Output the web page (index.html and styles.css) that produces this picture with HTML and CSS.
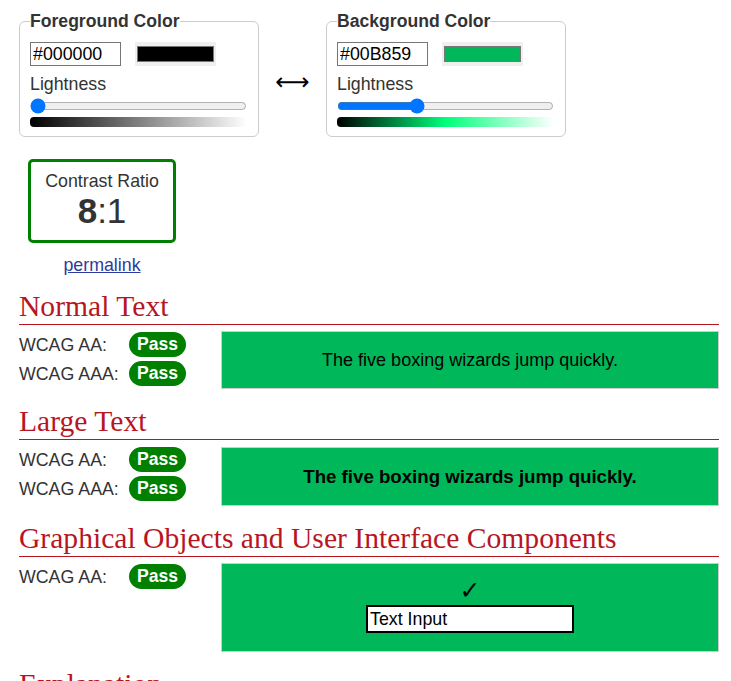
FILE: index.html
```html
<!DOCTYPE html>
<html lang="en">
<head>
<meta charset="utf-8">
<title>Contrast Checker</title>
<link rel="stylesheet" href="styles.css">
</head>
<body>
<div class="page">
  <div class="pickers">
    <fieldset class="picker">
      <legend>Foreground Color</legend>
      <div class="color-row">
        <input class="hex" type="text" value="#000000">
        <span class="swatch"><span class="swatch-fill fill-fg"></span></span>
      </div>
      <div class="light-label">Lightness</div>
      <input class="slider" type="range" min="0" max="100" value="0">
      <div class="grad grad-fg"></div>
    </fieldset>
    <div class="swap">&#x27F7;</div>
    <fieldset class="picker">
      <legend>Background Color</legend>
      <div class="color-row">
        <input class="hex" type="text" value="#00B859">
        <span class="swatch"><span class="swatch-fill fill-bg"></span></span>
      </div>
      <div class="light-label">Lightness</div>
      <input class="slider" type="range" min="0" max="100" value="36">
      <div class="grad grad-bg"></div>
    </fieldset>
  </div>

  <div class="ratio-wrap">
    <div class="ratio">
      <div class="ratio-label">Contrast Ratio</div>
      <div class="ratio-value"><b>8</b>:1</div>
    </div>
    <a class="permalink" href="#">permalink</a>
  </div>

  <h2 class="section-title">Normal Text</h2>
  <div class="result">
    <div class="checks">
      <div class="check"><span class="lbl">WCAG AA:</span><span class="pass">Pass</span></div>
      <div class="check"><span class="lbl">WCAG AAA:</span><span class="pass">Pass</span></div>
    </div>
    <div class="sample sample-normal">The five boxing wizards jump quickly.</div>
  </div>

  <h2 class="section-title">Large Text</h2>
  <div class="result">
    <div class="checks">
      <div class="check"><span class="lbl">WCAG AA:</span><span class="pass">Pass</span></div>
      <div class="check"><span class="lbl">WCAG AAA:</span><span class="pass">Pass</span></div>
    </div>
    <div class="sample sample-large">The five boxing wizards jump quickly.</div>
  </div>

  <h2 class="section-title">Graphical Objects and User Interface Components</h2>
  <div class="result">
    <div class="checks">
      <div class="check"><span class="lbl">WCAG AA:</span><span class="pass">Pass</span></div>
    </div>
    <div class="sample sample-ui">
      <span class="tick">&#x2713;</span>
      <input class="demo-input" type="text" value="Text Input">
    </div>
  </div>

  <h2 class="section-title">Explanation</h2>
</div>
</body>
</html>
```

FILE: styles.css
```css
html, body {
  margin: 0;
  padding: 0;
  background: #fff;
}

body {
  font-family: "Liberation Sans", Arial, sans-serif;
  font-size: 17.8px;
  line-height: 20px;
  color: #333;
}

.page {
  width: 700px;
  padding-left: 19px;
}

/* Pickers */
.pickers {
  display: flex;
  margin-top: 11px;
}

.picker {
  width: 240px;
  box-sizing: border-box;
  margin: 0;
  padding: 11px 11px 9px 10px;
  border: 1px solid #ccc;
  border-radius: 6px;
}

.picker legend {
  padding: 0;
  font-weight: bold;
  font-size: 17.6px;
  line-height: 20px;
  color: #333;
}

.color-row {
  display: flex;
  gap: 14px;
}

.hex {
  width: 91px;
  height: 24px;
  box-sizing: border-box;
  margin: 0;
  padding: 1px 2px;
  border: 1px solid #767676;
  font-family: "Liberation Sans", Arial, sans-serif;
  font-size: 17.8px;
  color: #000;
}

.swatch {
  width: 81px;
  height: 24px;
  box-sizing: border-box;
  padding: 4px 2px;
  background: #efefef;
  display: flex;
}

.swatch-fill {
  flex: 1;
  border: 1px solid #767676;
}

.fill-fg { background: #000000; }
.fill-bg { background: #00B859; }

.light-label {
  margin-top: 8px;
}

.slider {
  display: block;
  width: 217px;
  height: 16px;
  margin: 4px 0 0;
}

.grad {
  margin-top: 3px;
  width: 217px;
  height: 10px;
  border-radius: 4px;
}

.grad-fg {
  background: linear-gradient(to right, #000, #fff);
}

.grad-bg {
  background: linear-gradient(to right, #000, hsl(149, 100%, 50%), #fff);
}

.swap {
  width: 67px;
  display: flex;
  align-items: center;
  justify-content: center;
  padding-top: 16px;
  font-family: "DejaVu Sans", sans-serif;
  font-size: 24px;
  color: #000;
}

/* Ratio */
.ratio-wrap {
  width: 148px;
  margin: 22px 0 0 9px;
  display: flex;
  flex-direction: column;
  align-items: center;
}

.ratio {
  width: 148px;
  box-sizing: border-box;
  border: 3px solid #008000;
  border-radius: 5px;
  padding: 9px 0;
  text-align: center;
}

.ratio-value {
  font-size: 35px;
  line-height: 40px;
}

.permalink {
  margin-top: 12px;
  color: #2b3c9e;
}

/* Sections */
.section-title {
  margin: 14px 0 0;
  font-family: "Liberation Serif", Georgia, serif;
  font-weight: normal;
  font-size: 29.6px;
  line-height: 35px;
  color: #b8161f;
  border-bottom: 1px solid #b8161f;
}

.result {
  display: flex;
  padding-top: 6px;
  margin-bottom: 15px;
}

.checks {
  width: 202px;
  padding-top: 1px;
  display: flex;
  flex-direction: column;
  gap: 4px;
}

.check {
  display: flex;
  align-items: center;
  height: 25px;
}

.lbl {
  width: 110px;
}

.pass {
  background: #008000;
  color: #fff;
  font-weight: bold;
  font-size: 17.6px;
  border-radius: 13px;
  padding: 0 8px;
  line-height: 25px;
}

.sample {
  flex: 1;
  box-sizing: border-box;
  background: #00B859;
  border: 1px solid #ccc;
  color: #000;
  display: flex;
  align-items: center;
  justify-content: center;
}

.sample-normal {
  height: 58px;
  font-size: 18px;
}

.sample-large {
  height: 59px;
  margin-top: 1px;
  font-weight: bold;
  font-size: 18.66px;
}

.sample-ui {
  height: 89px;
  flex-direction: column;
  justify-content: flex-start;
  padding-top: 14px;
}

.tick {
  font-family: "DejaVu Sans", sans-serif;
  font-weight: bold;
  font-size: 25px;
  line-height: 26px;
}

.demo-input {
  margin-top: 1px;
  width: 208px;
  height: 28px;
  box-sizing: border-box;
  border: 2px solid #000;
  padding: 0 2px;
  font-family: "Liberation Sans", Arial, sans-serif;
  font-size: 17.8px;
  color: #000;
  background: #fff;
}
```
